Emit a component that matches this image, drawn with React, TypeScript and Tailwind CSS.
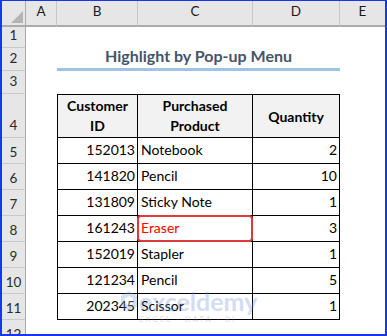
import React from 'react';

const font = { fontFamily: 'Lato, "Open Sans", sans-serif' };

const data = [
  ['152013', 'Notebook', '2'],
  ['141820', 'Pencil', '10'],
  ['131809', 'Sticky Note', '1'],
  ['161243', 'Eraser', '3'],
  ['152019', 'Stapler', '1'],
  ['121234', 'Pencil', '5'],
  ['202345', 'Scissor', '1'],
];

const RowNum = ({ n, tall }: { n: number; tall?: boolean }) => (
  <div className="bg-[#e6e6e6] border-r border-b border-r-[#ababab] border-b-[#c9c9c9] overflow-hidden">
    <div className={`flex items-end justify-center pb-[2px] text-[13.5px] text-[#2b2b2b] ${tall ? 'h-full' : 'h-[26px]'}`}>
      {n}
    </div>
  </div>
);

const ColHead = ({ l, last }: { l: string; last?: boolean }) => (
  <div
    className={`bg-[#e6e6e6] border-b-2 border-b-[#ababab] flex items-end justify-center pb-[4px] text-[13.5px] text-[#1a1a1a] ${
      last ? '' : 'border-r border-r-[#c6c6c6]'
    }`}
  >
    {l}
  </div>
);

export default function App() {
  return (
    <div
      style={font}
      className="relative w-[387px] h-[336px] bg-white border-l-2 border-t border-r-2 border-b-2 border-[#1636f0] overflow-hidden"
    >
      <div className="grid grid-cols-[24px_31px_81px_115px_87px_45px] grid-rows-[26px_21px_23px_23px_44px_repeat(7,26px)_26px] h-[359px]">
        {/* column headers */}
        <div className="bg-[#e6e6e6] border-r border-b-2 border-r-[#ababab] border-b-[#ababab] flex items-end justify-end pr-[2px] pb-[2px]">
          <svg width="12" height="12" viewBox="0 0 12 12">
            <polygon points="12,0 12,12 0,12" fill="#b4b4b4" />
          </svg>
        </div>
        <ColHead l="A" />
        <ColHead l="B" />
        <ColHead l="C" />
        <ColHead l="D" />
        <ColHead l="E" last />

        {/* row 1 */}
        <RowNum n={1} tall />
        <div className="col-span-5" />

        {/* row 2: title */}
        <RowNum n={2} tall />
        <div />
        <div className="col-span-3 border-b-[3px] border-[#9dc3e6] flex items-end justify-center pb-0 text-[16px] font-bold text-[#44546a]">
          Highlight by Pop-up Menu
        </div>
        <div />

        {/* row 3 */}
        <RowNum n={3} tall />
        <div className="col-span-5" />

        {/* row 4: table header */}
        <RowNum n={4} tall />
        <div />
        <div className="bg-[#f2f2f2] border-l border-t border-r border-b border-black flex items-center justify-center text-center text-[14px] font-bold leading-[20px] text-black">
          Customer
          <br />
          ID
        </div>
        <div className="bg-[#f2f2f2] border-t border-r border-b border-black flex items-center justify-center text-center text-[14px] font-bold leading-[20px] text-black">
          Purchased
          <br />
          Product
        </div>
        <div className="bg-[#f2f2f2] border-t border-r border-b border-black flex items-center justify-center text-[14px] font-bold text-black">
          Quantity
        </div>
        <div />

        {data.map(([id, product, qty], i) => (
          <React.Fragment key={id}>
            <RowNum n={5 + i} />
            <div />
            <div className="border-l border-r border-b border-black flex items-end justify-end pr-[2px] pb-[3px] text-[14px] text-black">
              {id}
            </div>
            <div
              className={`relative border-r border-b border-black flex items-end pl-[3px] pb-[3px] text-[14px] ${
                product === 'Eraser' ? 'text-[#ff0000]' : 'text-black'
              }`}
            >
              {product}
              {product === 'Eraser' && (
                <div className="absolute -left-px -top-px right-[-1px] bottom-[-1px] border-[2.5px] border-[#dd3b3b] rounded-[4px]" />
              )}
            </div>
            <div className="border-r border-b border-black flex items-end justify-end pr-[2px] pb-[3px] text-[14px] text-black">
              {qty}
            </div>
            <div />
          </React.Fragment>
        ))}

        {/* row 12, cut off */}
        <RowNum n={12} />
        <div className="col-span-5" />
      </div>

      {/* watermark */}
      <div className="absolute left-[119px] top-[287px] flex items-start gap-[2px] opacity-30 pointer-events-none">
        <svg width="16" height="20" viewBox="0 0 16 20" className="mt-[3px]">
          <polygon points="8,0 16,4.5 16,15.5 8,20 0,15.5 0,4.5" fill="#7f9edc" />
          <polygon points="8,5 12,7.5 12,12.5 8,15 4,12.5 4,7.5" fill="#ffffff" />
        </svg>
        <div className="flex flex-col">
          <span className="text-[25px] font-bold leading-[26px] text-[#6f8fd6]">exceldemy</span>
          <span className="text-[8px] tracking-[2px] leading-[10px] text-[#8a94a8]">EXCEL · DATA · BI</span>
        </div>
      </div>
    </div>
  );
}
